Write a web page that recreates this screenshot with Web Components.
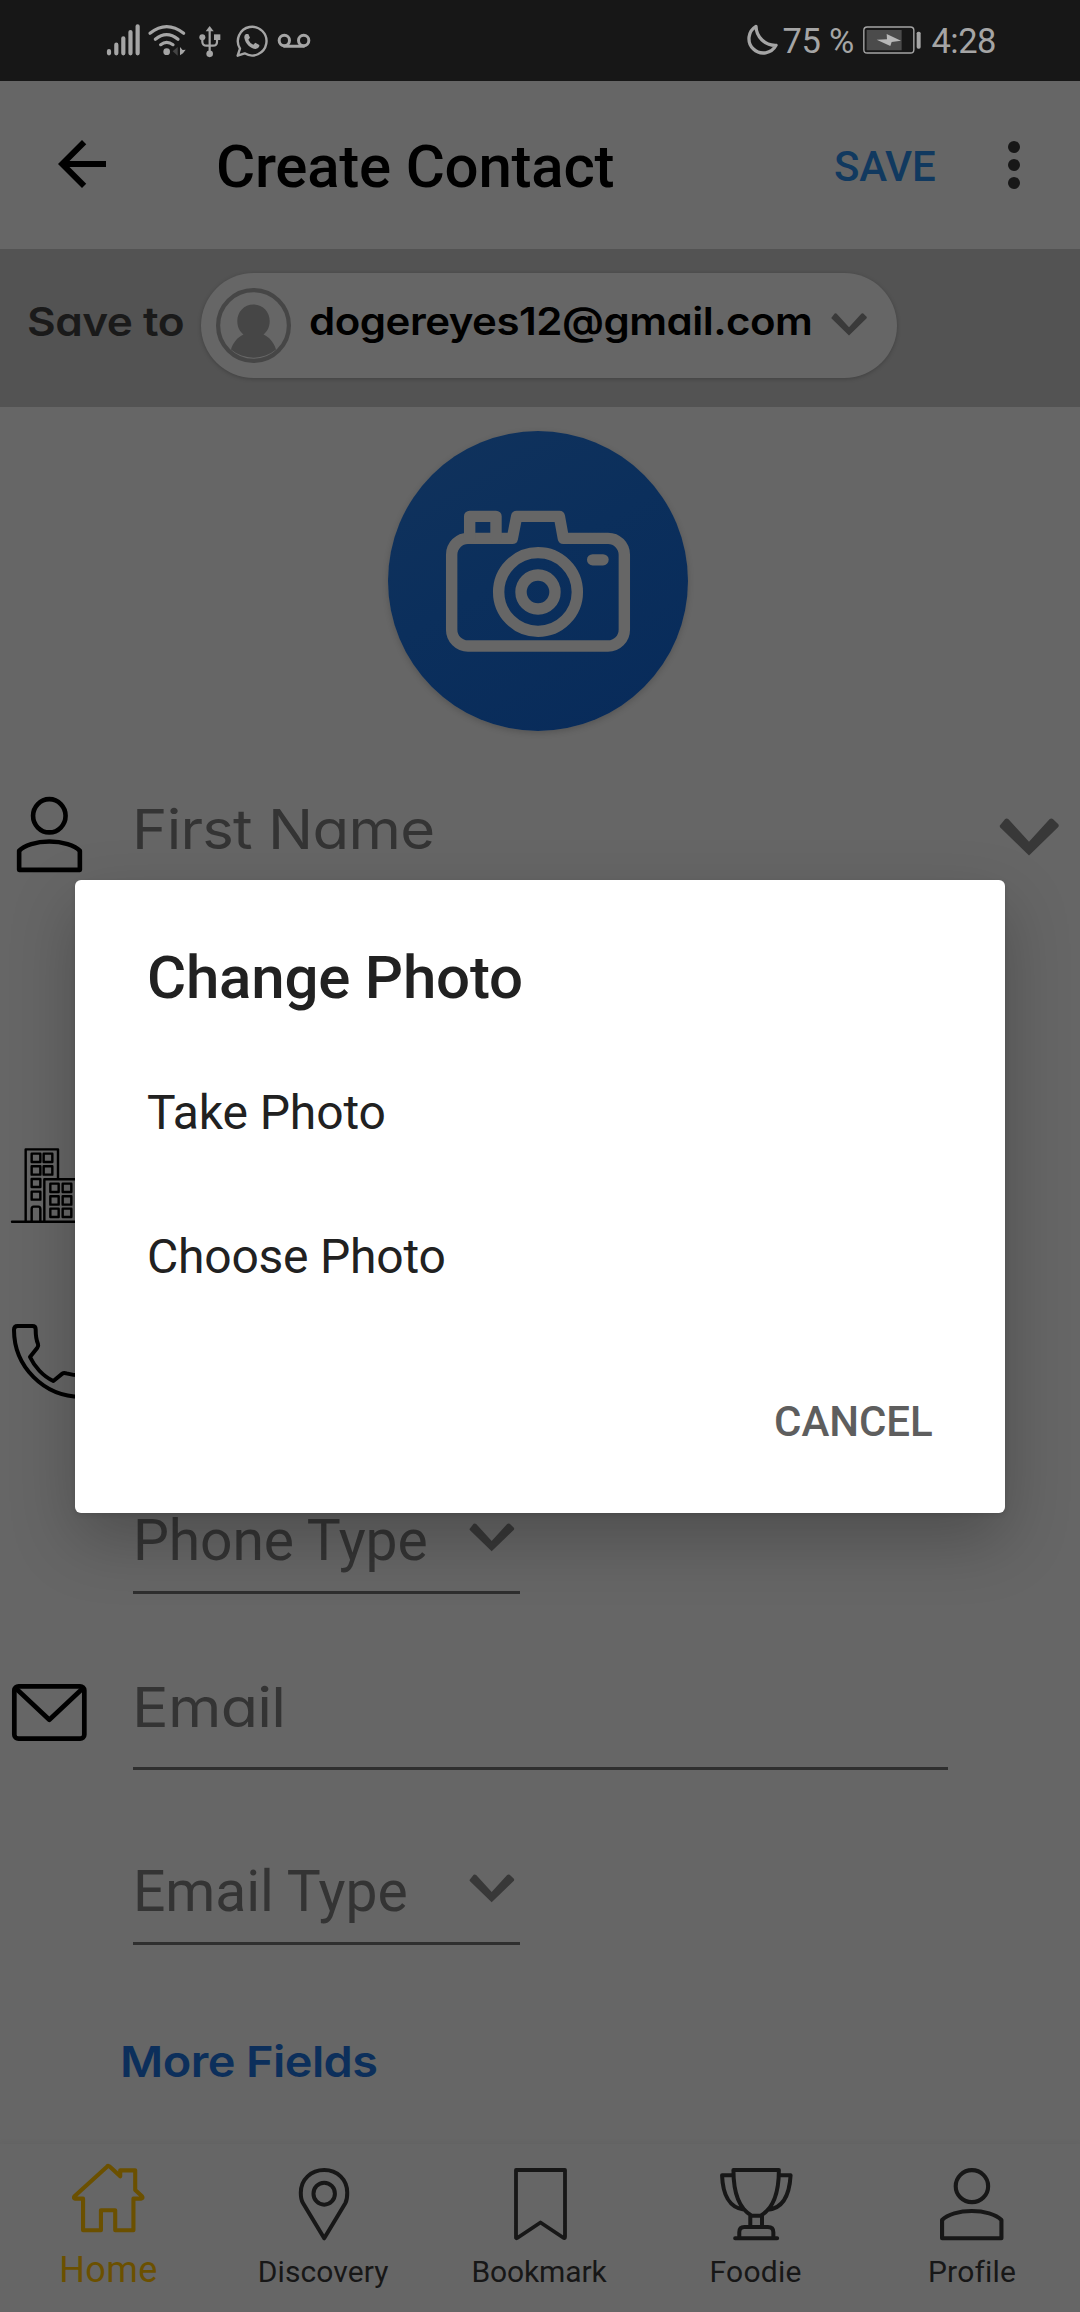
<!DOCTYPE html>
<html lang="en">
<head>
<meta charset="utf-8">
<title>Create Contact</title>
<style>
html,body{margin:0;padding:0;background:#666}
body{width:1080px;height:2312px;overflow:hidden;font-family:Roboto,"Liberation Sans",sans-serif}
</style>
</head>
<body>
<contact-screen></contact-screen>
<script>
const define = (name, html, setup) => customElements.define(name, class extends HTMLElement {
  constructor() {
    super();
    this.attachShadow({mode: 'open'}).innerHTML = html;
  }
  connectedCallback() { if (setup) setup(this); }
});

/* One line of text whose inked width is set by the "ink" attribute.
   "geo" labels widen their letters instead of the gaps between them. */
const pen = document.createElement('canvas').getContext('2d');
define('ui-label', `<style>
  :host{display:block;flex:none;white-space:nowrap;font-kerning:normal}
  span{display:inline-block;line-height:inherit;transform-origin:0 50%}
  :host([geo]) span{font-feature-settings:"cv11";font-optical-sizing:none;font-variation-settings:"opsz" 14}
</style><span><slot></slot></span>`, el => {
  const size = +el.getAttribute('size'), ink = +el.getAttribute('ink');
  const weight = el.getAttribute('weight') || 400, geo = el.hasAttribute('geo');
  const family = geo ? 'Inter, sans-serif' : 'Roboto, sans-serif';
  const text = el.textContent;
  pen.font = `${weight} ${size}px ${family}`;
  const m = pen.measureText(text);
  const span = el.shadowRoot.querySelector('span'), s = span.style;
  el.style.cssText += `;font:${weight} ${size}px/${size}px ${family};width:${ink}px;height:${size}px`;
  const left = m.actualBoundingBoxLeft;
  if (geo) {
    s.letterSpacing = '-.012em';
    const advance = span.getBoundingClientRect().width + .012 * size;
    const k = ink / (advance + left - (m.width - m.actualBoundingBoxRight));
    s.transform = `scaleX(${k.toFixed(4)})`;
    s.marginLeft = (left * k).toFixed(2) + 'px';
  } else {
    s.letterSpacing = ((ink - left - m.actualBoundingBoxRight) / (text.length - 1)).toFixed(3) + 'px';
    s.marginLeft = left.toFixed(2) + 'px';
  }
});

/* Icon set: [viewBox, width, height, markup, stroke width]. */
const ICONS = {
  signal: ['80 72 100 95', 33.3, 31.7, '<path d="M86 153V160M108 134V160M129 115V160M150.500 96V160M172 79V160" stroke-width="4.200"/>'],
  wifi: ['204 72 114 95', 38, 31.7, '<path d="M210 100Q260 60 311 100M226 118Q260 90 294 118M242 134Q260 120 279 134" stroke-width="3.200"/><circle cx="260" cy="155" r="10" fill="currentColor" stroke="none"/><path d="M293 141V167L278 154Z" fill="#444" stroke="none"/><path d="M300 141V166L309 160L317 149L308 150Z" fill="currentColor" stroke="none"/>'],
  usb: ['358 74 66 98', 22, 32.7, '<path d="M390 88V158M368 112V125Q369 136 380 136H400Q412 136 412 125V112" stroke-width="2.200" /><path d="M378 93L390 77L402 93Z" fill="currentColor" stroke="none"/><circle cx="390" cy="160.500" r="10" fill="currentColor" stroke="none"/><circle cx="368" cy="111" r="9" fill="currentColor" stroke="none"/><path d="M403 102H422V119H403Z" fill="currentColor" stroke="none"/>'],
  whatsapp: ['468 74 94 98', 31.3, 32.7, '<path d="M480 145A43 43 0 1 1 494 159L473 166Z" stroke-width="2.400"/><path d="M498 101Q492 104 493 112C496 131 513 145 527 146Q536 145 538 138L538 134L526 127L520 133Q510 129 505 118L510 112L505 101Z" fill="currentColor" stroke="none"/>'],
  voicemail: ['594 100 96 46', 32, 15.3, '<circle cx="613" cy="122.500" r="15.500"/><circle cx="671" cy="122.500" r="15.500"/><path d="M613 139.500H671"/>', 3],
  moon: ['78 72 96 96', 32, 32, '<path d="M108 79A43 43 0 1 0 168 136A58 58 0 0 1 108 79Z"/>', 3.3],
  battery: ['429 79 174 84', 58, 28, '<rect x="431.500" y="82" width="150" height="78" rx="10" stroke-width="1.400"/><path d="M440 91H545V152H440Z" fill="#4b4b4b" stroke="none"/><path d="M500 103L543 123L515 127L511 139L470 120L501 119Z" fill="#b8b8b8" stroke="none"/><rect x="590" y="96" width="12" height="51" rx="5" fill="currentColor" stroke="none"/>'],
  back: ['4 4 16 16', 48, 48, '<path d="M20 11H7.830L13.420 5.410 12 4 4 12 12 20 13.410 18.590 7.830 13H20Z" fill="currentColor" stroke="none"/>'],
  dots: ['0 0 12 48', 12, 48, '<g fill="currentColor" stroke="none"><circle cx="6" cy="6" r="6"/><circle cx="6" cy="24" r="6"/><circle cx="6" cy="42" r="6"/></g>'],
  avatar: ['0 0 75 75', 75, 75, '<circle cx="37.500" cy="37.500" r="35.400" stroke-width="4.200"/><path d="M37.500 16.500C47 16.500 53.700 24 53.700 33C53.700 40 50.500 44 47.500 46.500C54 49.500 58 55 60 61.500A35 35 0 0 1 15 61.500C17 55 21 49.500 27.500 46.500C24.500 44 21.300 40 21.300 33C21.300 24 28 16.500 37.500 16.500Z" fill="currentColor" stroke="none"/>'],
  chev: ['0 0 36 22.500', 36, 22.5, '<path d="M0.400 4.700 3.700 .6Q4.700 0 5.700 .8L18 14.300 30.300 .8Q31.300 0 32.300 .6L35.600 3.700Q36.200 4.700 35.400 5.600L18 22.500 .6 5.600Z" fill="currentColor" stroke="none"/>'],
  camera: ['84 62 900 900', 300, 300, '<g stroke-width="11.400"><path d="M324 384A49 49 0 0 0 275 433V658A49 49 0 0 0 324 707H744A49 49 0 0 0 793 658V433A49 49 0 0 0 744 384H610L598 318H470L457 384Z"/><path d="M329 384V318H408V384"/><circle cx="534" cy="545" r="118"/><circle cx="534" cy="545" r="51"/><path d="M698 448.500H729"/></g>'],
  person: ['48 110 182 227', 65, 75.5, '<ellipse cx="138.500" cy="166.500" rx="45.500" ry="50"/><path d="M54 329V272C68 255 102 244 138.500 244C175 244 210 255 224 272V329Z"/>', 4.6],
  company: ['36 84 225 226', 75, 75.3, '<g stroke-width="2.400"><path d="M36 305.500H261M77 305V88H174V178M133 305V178H243V305"/><path d="M95 303V267Q95 260 101 260H115Q121 260 121 267V303"/></g><g stroke-width="2.400"><path d="M95 101H121V126H95ZM131 101H157V126H131ZM95 139H121V164H95ZM131 139H157V164H131ZM95 177H121V201H95ZM95 215H121V239H95ZM151 191H176V216H151ZM188 191H214V216H188ZM151 229H176V254H151ZM188 229H214V254H188ZM151 266H176V291H151ZM188 266H214V291H188Z"/></g>'],
  phone: ['36 612 225 225', 75, 75, '<path d="M42 629Q42 618 53 618H97Q107 618 107 628C107 648 109 661 114 672Q116 677 112 683L90 711C103 739 129 769 160 783L187 761Q192 757 199 760C213 764 228 766 243 766Q254 766 254 777V819Q254 830 243 830C132 830 42 740 42 629Z"/>', 4],
  mail: ['34 612 210 171', 75, 57, '<rect x="40.500" y="619" width="196" height="157" rx="12" ry="12"/><path d="M46 626L138.500 719L231 626"/>', 4.7],
  home: ['201 131 203 205', 72.5, 68.3, '<path d="M232 330V235H210Q204 234 208 228L299 139Q303 134 308 140L336 168V150H378V209L397 228Q401 234 394 235H373V330H322V270H282V330Z"/>', 4.1],
  pin: ['837 143 141 217', 50.4, 72.3, '<path d="M907.500 354L848 248C842 237 842 228 842 217C842 177 871 149 907.500 149C944 149 972 177 972 217C972 228 972 237 967 248Z"/><ellipse cx="907.500" cy="220" rx="30" ry="33"/>', 4],
  bookmark: ['0 0 53 72', 53, 72, '<path d="M2 2H51V69Q51 71 49 69.500L26.500 54.500 4 69.500Q2 71 2 69.500Z"/>', 3.8],
  trophy: ['522 143 210 217', 72.3, 72.3, '<path d="M561 149H693C693 216 677 265 640 286H614C577 265 561 216 561 149ZM561 165H528C530 220 548 264 593 268M693 165H727C724 220 706 264 661 268M610 286V319M644 286V319M578 353V336Q578 320 593 320H661Q677 320 677 336V353M566 354H688"/>', 4],
  profile: ['1162 143 184 217', 63.5, 72.3, '<ellipse cx="1254.500" cy="197.500" rx="47" ry="48"/><path d="M1168 354V299C1184 282 1218 272 1254 272C1290 272 1324 282 1340 299V354Z"/>', 4.1]
};
define('ui-icon', `<style>:host{display:block;flex:none}svg{display:block;overflow:visible}svg *{vector-effect:non-scaling-stroke}</style><svg fill="none" stroke="currentColor" stroke-linejoin="round" stroke-linecap="round" preserveAspectRatio="none"></svg>`, el => {
  const [box, w, h, body, sw] = ICONS[el.getAttribute('name')];
  const svg = el.shadowRoot.querySelector('svg'), k = +(el.getAttribute('scale') || 1);
  svg.setAttribute('viewBox', box);
  svg.setAttribute('width', w * k);
  svg.setAttribute('height', h * k);
  if (sw) svg.setAttribute('stroke-width', sw);
  svg.innerHTML = body;
});

define('status-bar', `<style>
  :host{display:flex;height:81px;background:#171717;color:#a5a5a5;align-items:flex-start;box-sizing:border-box;padding:24px 85px 0 106.700px}
  .r{display:flex;margin-left:auto}
</style>
<ui-icon name="signal"></ui-icon>
<ui-icon name="wifi" style="margin-left:8px"></ui-icon>
<ui-icon name="usb" style="margin:.7px 0 0 13.300px"></ui-icon>
<ui-icon name="whatsapp" style="margin:.7px 0 0 14.700px"></ui-icon>
<ui-icon name="voicemail" style="margin:9.400px 0 0 10.700px"></ui-icon>
<div class="r">
<ui-icon name="moon"></ui-icon>
<ui-label size="34.500" ink="69.500" style="margin-left:5.500px">75 %</ui-label>
<ui-icon name="battery" style="margin:2.400px 0 0 10px"></ui-icon>
<ui-label size="34.500" ink="63.500" style="margin-left:10.500px">4:28</ui-label>
</div>`);

define('app-header', `<style>
  :host{display:flex;height:168px;box-sizing:border-box;padding-left:58px;align-items:flex-start;color:#000}
</style>
<ui-icon name="back" style="margin-top:59px"></ui-icon>
<ui-label size="60" weight="500" ink="395.500" style="margin:56px 0 0 112px">Create Contact</ui-label>
<ui-label size="42" weight="500" ink="100" style="margin:65px 0 0 221.500px;color:#11395f">SAVE</ui-label>
<ui-icon name="dots" style="margin:60px 0 0 73px;color:#171717"></ui-icon>`);

define('account-bar', `<style>
  :host{display:flex;height:158px;box-sizing:border-box;background:#535353;padding:24px 0 0 28px;align-items:flex-start}
  .pill{display:flex;align-items:flex-start;box-sizing:border-box;width:696px;height:105px;border-radius:53px;background:#666;margin-left:18px;padding:15px 0 0 15px;box-shadow:0 1px 4px rgba(0,0,0,.22)}
</style>
<ui-label geo size="40" weight="600" ink="155" style="color:#1a1a1a;margin-top:28.500px">Save to</ui-label>
<div class="pill">
<ui-icon name="avatar" style="color:#464646"></ui-icon>
<ui-label geo size="38.500" weight="600" ink="501" style="margin:14px 0 0 19px;color:#000">dogereyes12@gmail.com</ui-label>
<ui-icon name="chev" style="margin:24.700px 0 0 20px;color:#3a3a3a"></ui-icon>
</div>`);

define('photo-button', `<style>
  :host{display:flex;padding:24px 0 0 388px;height:300px}
  div{width:300px;height:300px;border-radius:50%;background:linear-gradient(150deg,#10325c 5%,#0b2f5c 45%,#082b5a 95%);box-shadow:0 2px 6px rgba(0,0,0,.18);color:#666}
</style><div><ui-icon name="camera"></ui-icon></div>`);

define('form-row', `<style>
  :host{display:flex;box-sizing:border-box;align-items:stretch;height:var(--h)}
  .icon{width:133px;flex:none;box-sizing:border-box;padding:var(--icon-top,0) 0 0 var(--icon-left,12px);color:#000}
  .field{display:flex;box-sizing:border-box;align-items:flex-start;justify-content:space-between;width:var(--w,387px);padding:0 6px 0 3.500px;border-bottom:var(--line,3px) solid #2f2f2f;color:#343434}
</style><div class="icon"><slot name="icon"></slot></div><div class="field"><slot></slot></div>`);

define('nav-item', `<style>
  :host{display:flex;flex-direction:column;align-items:center;width:216px;color:#171717;padding-top:24px;gap:16.500px;box-sizing:border-box}
  :host([active]){color:#6b5000;padding-top:20px;gap:19.500px}
</style><slot></slot>`);

define('bottom-nav', `<style>
  :host{display:flex;height:168px;margin-top:7px;background:#666;box-shadow:0 -2px 5px rgba(0,0,0,.035)}
</style>
<nav-item active><ui-icon name="home"></ui-icon><ui-label size="36" ink="95" style="margin-left:1.500px">Home</ui-label></nav-item>
<nav-item><ui-icon name="pin"></ui-icon><ui-label size="30" ink="128.500">Discovery</ui-label></nav-item>
<nav-item><ui-icon name="bookmark"></ui-icon><ui-label size="30" ink="134" style="margin:.3px 0 0 1px">Bookmark</ui-label></nav-item>
<nav-item><ui-icon name="trophy"></ui-icon><ui-label size="30" ink="89">Foodie</ui-label></nav-item>
<nav-item><ui-icon name="profile"></ui-icon><ui-label size="30" ink="84">Profile</ui-label></nav-item>`);

define('photo-dialog', `<style>
  :host{position:absolute;left:75px;top:880px;width:930px;height:633px;box-sizing:border-box;display:flex;flex-direction:column;background:#fff;border-radius:6px;padding:67.500px 73px 0 74px;color:#212121;box-shadow:0 26px 66px rgba(0,0,0,.24),0 2px 5px rgba(0,0,0,.1)}
</style>
<ui-label size="60" weight="500" ink="372">Change Photo</ui-label>
<ui-label size="48" ink="236.500" style="margin:81px 0 0 -1px">Take Photo</ui-label>
<ui-label size="48" ink="295.500" style="margin-top:96px">Choose Photo</ui-label>
<ui-label size="42" weight="500" ink="156" style="align-self:flex-end;margin-top:120px;color:#5e5e5e">CANCEL</ui-label>`);

define('contact-screen', `<style>
  :host{display:block;position:relative;width:1080px;height:2312px;background:#666;overflow:hidden}
  main{display:flex;flex-direction:column;height:1730px}
</style>
<status-bar></status-bar>
<app-header></app-header>
<account-bar></account-bar>
<main>
<photo-button></photo-button>
<form-row style="--h:369px;--icon-top:66px;--icon-left:17px;--line:0;--w:932px">
<ui-icon slot="icon" name="person"></ui-icon>
<ui-label geo size="55" ink="296.500" style="margin-top:70.500px">First Name</ui-label>
<ui-icon name="chev" scale="1.667" style="margin-top:86.500px;color:#383838"></ui-icon>
</form-row>
<form-row style="--h:200px;--icon-top:48px;--line:0"><ui-icon slot="icon" name="company"></ui-icon></form-row>
<form-row style="--h:200px;--icon-top:24px;--line:0"><ui-icon slot="icon" name="phone"></ui-icon></form-row>
<form-row style="--h:94px">
<ui-label size="57" ink="290.500" style="margin:12px 0 0 .5px">Phone Type</ui-label>
<ui-icon name="chev" scale="1.260" style="margin-top:22.500px;color:#383838"></ui-icon>
</form-row>
<form-row style="--h:176px;--icon-top:90px;--w:815px">
<ui-icon slot="icon" name="mail"></ui-icon>
<ui-label geo size="55" ink="146" style="margin-top:85.500px">Email</ui-label>
</form-row>
<form-row style="--h:175px">
<ui-label size="57" ink="270.500" style="margin:93px 0 0 .5px">Email Type</ui-label>
<ui-icon name="chev" scale="1.260" style="margin-top:103.500px;color:#383838"></ui-icon>
</form-row>
<ui-label geo size="43" weight="600" ink="253" style="margin:95px 0 0 123px;color:#0c2f5b">More Fields</ui-label>
</main>
<bottom-nav></bottom-nav>
<photo-dialog></photo-dialog>`);
</script>
</body>
</html>
